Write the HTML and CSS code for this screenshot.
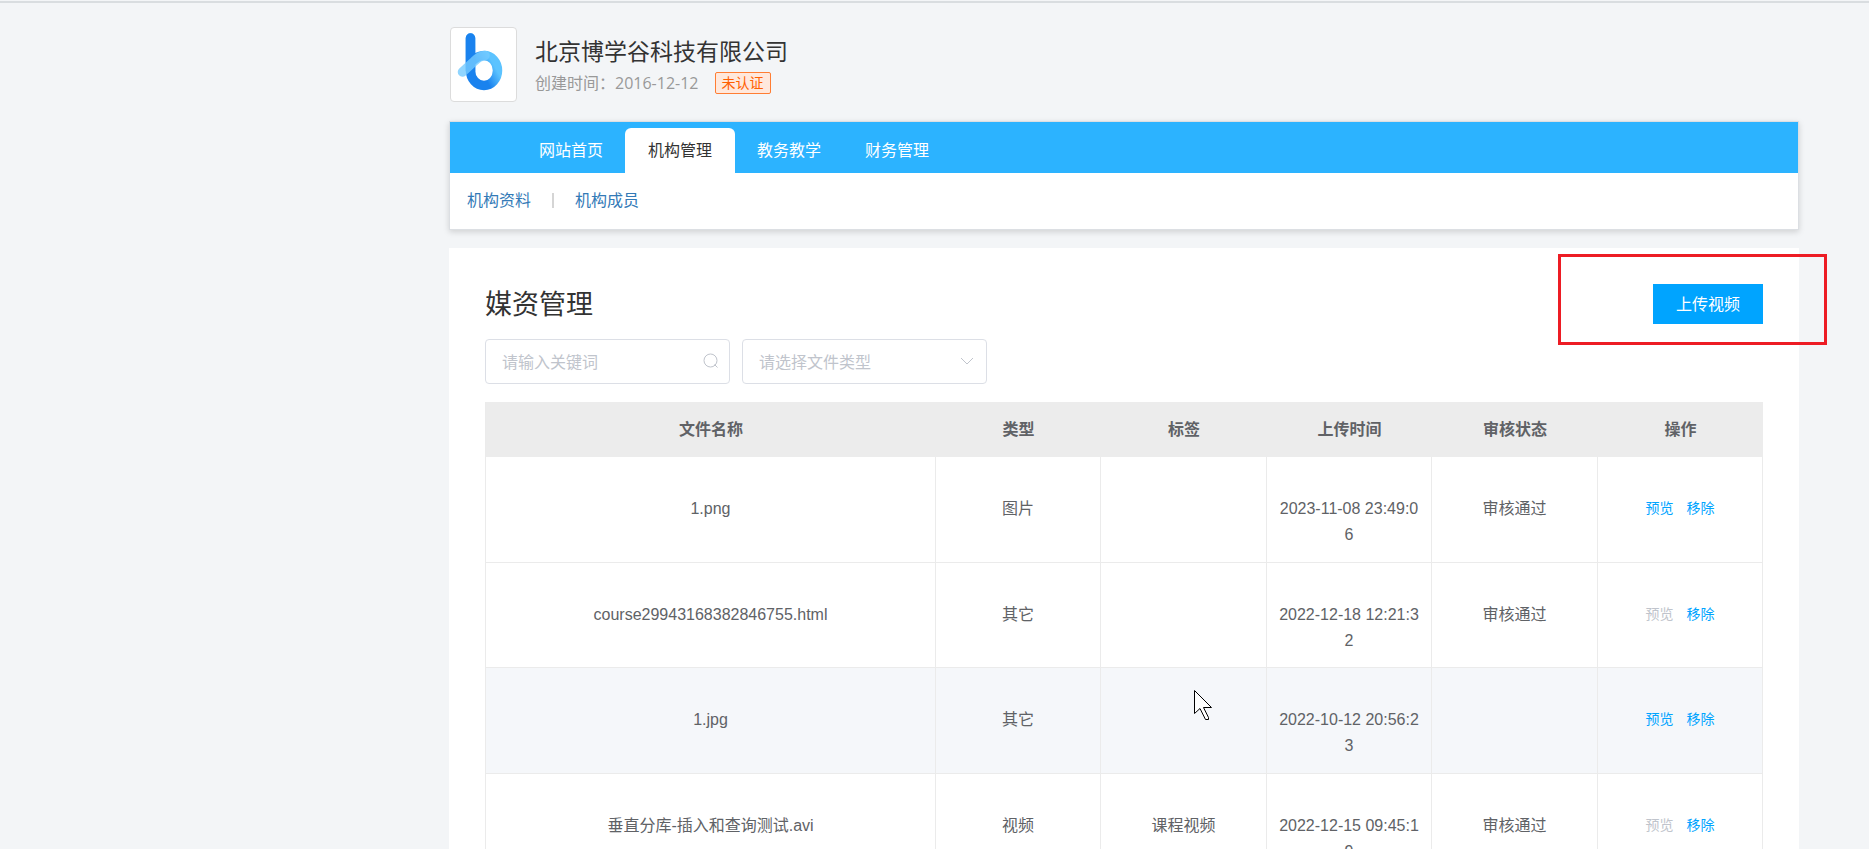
FILE: index.html
```html
<!DOCTYPE html>
<html lang="zh-CN">
<head>
<meta charset="utf-8">
<title>媒资管理</title>
<link rel="stylesheet" href="styles.css">
</head>
<body>
<div class="page">
  <header class="org">
    <div class="org-logo">
      <svg width="48" height="60" viewBox="0 0 48 60" aria-hidden="true">
        <defs>
          <linearGradient id="ring" x1="0" y1="1" x2="1" y2="0">
            <stop offset="0.35" stop-color="#1a82ee"/>
            <stop offset="0.65" stop-color="#5cc3ff"/>
          </linearGradient>
        </defs>
        <path d="M13.500 5V37.500A13.500 15 0 1 0 27 22.500Q21 22.500 15 28" fill="none" stroke="url(#ring)" stroke-width="9.500" stroke-linecap="round"/>
        <path d="M13.500 5V37.500" fill="none" stroke="#1a82ee" stroke-width="9.500" stroke-linecap="round"/>
        <path d="M5.500 39L17 28.500Q22 23 28 22.500" fill="none" stroke="#74caff" stroke-opacity="0.800" stroke-width="9.500" stroke-linecap="round"/>
      </svg>
    </div>
    <div class="org-info">
      <h1 class="org-name">北京博学谷科技有限公司</h1>
      <p class="org-meta"><span>创建时间：2016-12-12</span><span class="badge">未认证</span></p>
    </div>
  </header>

  <nav class="nav">
    <div class="tabs">
      <a class="tab" href="#">网站首页</a>
      <a class="tab tab-active" href="#">机构管理</a>
      <a class="tab" href="#">教务教学</a>
      <a class="tab" href="#">财务管理</a>
    </div>
    <div class="subnav">
      <a class="sublink" href="#">机构资料</a>
      <span class="divider"></span>
      <a class="sublink" href="#">机构成员</a>
    </div>
  </nav>

  <main class="card">
    <div class="card-head">
      <h2 class="card-title">媒资管理</h2>
      <div class="upload">
        <button class="upload-btn" type="button">上传视频</button>
        <span class="marker"></span>
      </div>
    </div>
    <form class="filters">
      <div class="field">
        <input class="control" type="text" placeholder="请输入关键词" aria-label="关键词">
        <svg class="field-icon" width="16" height="16" viewBox="0 0 16 16" aria-hidden="true"><circle cx="7.500" cy="7.500" r="6.500"/><path d="M11.500 11.500L14.500 14.500"/></svg>
      </div>
      <div class="field">
        <select class="control" aria-label="文件类型"><option>请选择文件类型</option></select>
        <svg class="field-icon" width="16" height="16" viewBox="0 0 16 16" aria-hidden="true"><path d="M1 5L7 11L13 5"/></svg>
      </div>
    </form>
    <table class="files">
      <colgroup><col><col class="col-odd"><col class="col-even"><col class="col-odd"><col class="col-even"><col class="col-odd"></colgroup>
      <thead>
        <tr><th>文件名称</th><th>类型</th><th>标签</th><th>上传时间</th><th>审核状态</th><th>操作</th></tr>
      </thead>
      <tbody>
        <tr><td>1.png</td><td>图片</td><td></td><td>2023-11-08 23:49:06</td><td>审核通过</td>
          <td><div class="actions"><button class="action" type="button">预览</button><button class="action" type="button">移除</button></div></td></tr>
        <tr><td>course29943168382846755.html</td><td>其它</td><td></td><td>2022-12-18 12:21:32</td><td>审核通过</td>
          <td><div class="actions"><button class="action" type="button" disabled>预览</button><button class="action" type="button">移除</button></div></td></tr>
        <tr class="row-hover"><td>1.jpg</td><td>其它</td><td></td><td>2022-10-12 20:56:23</td><td></td>
          <td><div class="actions"><button class="action" type="button">预览</button><button class="action" type="button">移除</button></div></td></tr>
        <tr><td>垂直分库-插入和查询测试.avi</td><td>视频</td><td>课程视频</td><td>2022-12-15 09:45:19</td><td>审核通过</td>
          <td><div class="actions"><button class="action" type="button" disabled>预览</button><button class="action" type="button">移除</button></div></td></tr>
      </tbody>
    </table>
  </main>
</div>
<svg class="cursor" width="20" height="32" viewBox="0 0 20 32" aria-hidden="true"><path d="M0.500 0.500V23.500L6 18.500L11.500 29.500H14.500V27.500L9.500 17.500H17.500Z" fill="#fff" stroke="#000"/></svg>
</body>
</html>
```
FILE: styles.css
```css
* { box-sizing: border-box; }
html { scrollbar-width: none; }
body {
  margin: 0;
  height: 100vh;
  overflow: hidden;
  background: #f3f5f7;
  color: #333;
  font: 16px/26px "Open Sans", "Noto Sans CJK SC", sans-serif;
}
h1, h2, p { margin: 0; font-weight: 400; }
a { text-decoration: none; }
button, input, select { font: inherit; }

.page {
  margin-top: 1px;
  border-top: 2px solid #d9dde0;
  padding: 24px 70px 0 449px;
}

.org { display: flex; gap: 18px; padding-left: 1px; }
.org-logo {
  width: 67px;
  height: 75px;
  padding: 5px 0 0 6px;
  background: #fff;
  border: 1px solid #dcdcdc;
  border-radius: 4px;
}
.org-logo svg { display: block; }
.org-info { padding-top: 8px; }
.org-name { font-size: 23px; line-height: 32px; }
.org-meta { display: flex; align-items: center; gap: 16px; padding-top: 3px; color: #999; }
.badge {
  padding: 0 6px;
  border: 1px solid #ff7d33;
  border-radius: 2px;
  background: #ffe8dc;
  color: #ff6000;
  font-size: 14px;
  line-height: 20px;
}

.nav {
  margin-top: 19px;
  border: 1px solid #dcdfe3;
  background: #fff;
  box-shadow: 0 2px 6px rgba(0, 0, 0, 0.15);
}
.tabs { display: flex; padding: 6px 0 0 67px; background: #2cb3ff; }
.tab { padding: 0 22px; color: #fff; line-height: 45px; }
.tab-active { padding: 0 23px; border-radius: 6px 6px 0 0; background: #fff; color: #333; }
.subnav { display: flex; align-items: center; gap: 21px; height: 56px; padding: 0 0 2px 17px; }
.sublink { color: #337ab7; }
.divider { width: 2px; height: 15px; background: #d5d5d5; }

.card { margin-top: 18px; padding: 36px 36px 0; background: #fff; }
.card-head { display: flex; align-items: center; justify-content: space-between; }
.card-title { font-size: 27px; line-height: 40px; }
.upload { position: relative; }
.upload-btn { display: block; width: 110px; height: 40px; padding: 0; border: 0; background: #00a4ff; color: #fff; }
.marker { position: absolute; inset: -30px -64px -21px -95px; border: 3px solid #ed1c24; pointer-events: none; }

.filters { display: flex; gap: 12px; padding: 15px 0 18px; }
.field { position: relative; width: 245px; }
.control {
  display: block;
  width: 100%;
  height: 45px;
  padding: 0 16px;
  border: 1px solid #dcdfe6;
  border-radius: 4px;
  background: #fff;
  color: #c0c4cc;
  appearance: none;
}
.control::placeholder { color: #c0c4cc; }
.field-icon { position: absolute; top: 14px; right: 11px; fill: none; stroke: #c0c4cc; pointer-events: none; }

.files {
  width: 100%;
  table-layout: fixed;
  border-spacing: 0;
  border-left: 1px solid #ebebeb;
  color: #606266;
  font-family: "Liberation Sans", "Noto Sans CJK SC", sans-serif;
  text-align: center;
}
.col-odd { width: 165px; }
.col-even { width: 166px; }
.files th { height: 55px; padding: 0; background: #ececec; font-weight: 700; }
.files td {
  padding: 39px 12px 13px;
  border-right: 1px solid #ebebeb;
  border-bottom: 1px solid #ebebeb;
  vertical-align: top;
  word-break: break-all;
}
.files tr:nth-child(odd) td { padding-bottom: 14px; }
.row-hover { background: #f5f7fa; }
.actions { display: flex; justify-content: center; gap: 13px; }
.action { padding: 0; border: 0; background: none; color: #00a4ff; font-size: 14px; line-height: 24px; }
.action:disabled { color: #c0c4cc; }

.cursor { position: absolute; left: 1194px; top: 690px; }
```
